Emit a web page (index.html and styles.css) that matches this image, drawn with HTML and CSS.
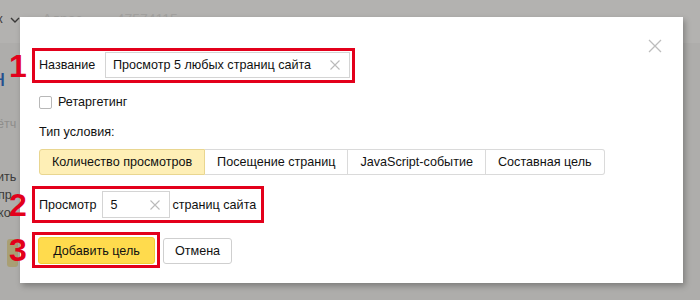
FILE: index.html
```html
<!DOCTYPE html>
<html lang="ru">
<head>
<meta charset="utf-8">
<title>Добавить цель</title>
<link rel="stylesheet" href="styles.css">
</head>
<body>
<div class="page">
  <div class="top">
    <span class="crumb">к</span>
    <svg class="chev" width="10" height="6" viewBox="0 0 10 6"><path d="M1 1l4 4 4-4" fill="none" stroke="#3a3938" stroke-width="1.4"/></svg>
    <span class="addr">Адрес</span>
    <span class="addr-num">47574115</span>
  </div>
  <div class="side">
    <span class="big-n">н</span>
    <span class="s1">ётч</span>
    <span class="s2">ить</span>
    <span class="s3">пр</span>
    <span class="s4">ко</span>
    <span class="sq"></span>
  </div>
</div>

<div class="modal">
  <svg class="close" width="14" height="14" viewBox="0 0 14 14"><path d="M1 1l12 12M13 1L1 13" stroke="#bdbdbd" stroke-width="1.3" fill="none"/></svg>
  <div class="content">
    <div class="annot a1">
      <span class="num">1</span>
      <span class="lbl">Название</span>
      <div class="input in1">
        <span class="val">Просмотр 5 любых страниц сайта</span>
        <svg class="clr" width="10" height="10" viewBox="0 0 10 10"><path d="M0.5 0.5l9 9M9.5 0.5l-9 9" stroke="#bbb" stroke-width="1.1" fill="none"/></svg>
      </div>
    </div>

    <label class="check">
      <span class="box"></span>
      <span>Ретаргетинг</span>
    </label>

    <div class="type">Тип условия:</div>

    <div class="tabs">
      <span class="tab active">Количество просмотров</span>
      <span class="tab">Посещение страниц</span>
      <span class="tab">JavaScript-событие</span>
      <span class="tab">Составная цель</span>
    </div>

    <div class="annot a2">
      <span class="num">2</span>
      <span class="lbl2">Просмотр</span>
      <div class="input in2">
        <span class="val">5</span>
        <svg class="clr" width="10" height="10" viewBox="0 0 10 10"><path d="M0.5 0.5l9 9M9.5 0.5l-9 9" stroke="#bbb" stroke-width="1.1" fill="none"/></svg>
      </div>
      <span class="after">страниц сайта</span>
    </div>

    <div class="actions">
      <div class="annot a3">
        <span class="num">3</span>
        <button class="btn primary">Добавить цель</button>
      </div>
      <button class="btn cancel">Отмена</button>
    </div>
  </div>
</div>
</body>
</html>
```

FILE: styles.css
```css
html, body {
  margin: 0;
  padding: 0;
}
body {
  width: 700px;
  height: 300px;
  overflow: hidden;
  position: relative;
  background: #afaeac;
  font-family: "Liberation Sans", Arial, sans-serif;
  font-size: 12.6px;
  color: #111;
}

/* background page (dimmed) */
.page {
  height: 300px;
  background: linear-gradient(#b3b2b0 0, #b3b2b0 43px, #aeadab 43px);
}
.top {
  height: 43px;
  display: flex;
  align-items: flex-start;
  padding-top: 11px;
  box-sizing: border-box;
  line-height: 16px;
}
.crumb {
  color: #3a3938;
  margin-left: -3px;
}
.chev {
  margin: 6px 0 0 7px;
}
.addr {
  color: #a3a2a0;
  margin-left: 23px;
  font-size: 14px;
}
.addr-num {
  color: #a3a2a0;
  margin-left: 34px;
  font-size: 14px;
}
.side {
  display: flex;
  flex-direction: column;
  align-items: flex-start;
  line-height: 16px;
  color: #3b3a39;
}
.big-n {
  margin-top: 24px;
  margin-left: -8px;
  font-size: 24px;
  line-height: 22px;
  color: #24508f;
}
.s1 {
  margin-top: 27px;
  margin-left: -3px;
  color: #8e8d8b;
}
.s2 {
  margin-top: 37px;
  margin-left: -3px;
}
.s3 {
  margin-top: 2px;
  margin-left: -2px;
}
.s4 {
  margin-top: 2px;
  margin-left: -2px;
}
.sq {
  margin-top: 18px;
  margin-left: 7px;
  width: 11px;
  height: 28px;
  border-radius: 3px;
  background: #a99f74;
}

/* modal */
.modal {
  position: absolute;
  left: 20px;
  top: 17px;
  width: 663px;
  height: 266px;
  background: #fff;
  box-shadow: 2px 3px 6px rgba(0, 0, 0, 0.28);
}
.close {
  position: absolute;
  left: 628px;
  top: 22px;
}
.content {
  padding: 31px 0 0 12px;
  display: flex;
  flex-direction: column;
  align-items: flex-start;
}
.annot {
  position: relative;
  display: flex;
  align-items: center;
  border: 3px solid #e3001b;
}
.num {
  position: absolute;
  left: -26px;
  top: 50%;
  transform: translateY(-50%);
  font-size: 32px;
  font-weight: bold;
  line-height: 30px;
  color: #e3001b;
}
.a1 {
  padding: 1px 2px 2px 4px;
}
.lbl {
  width: 66px;
}
.input {
  box-sizing: border-box;
  display: flex;
  align-items: center;
  justify-content: space-between;
  border: 1px solid #d4d4d4;
  background: #fff;
}
.in1 {
  width: 245px;
  height: 26px;
  padding: 0 9px 0 7px;
}
.check {
  display: flex;
  align-items: center;
  gap: 6px;
  margin: 12px 0 0 7px;
  height: 14px;
}
.box {
  box-sizing: border-box;
  width: 13px;
  height: 13px;
  border: 1px solid #b8b8b8;
  border-radius: 2px;
  background: #fff;
}
.type {
  margin: 15px 0 0 7px;
  line-height: 16px;
}
.tabs {
  display: flex;
  margin: 9px 0 0 7px;
  height: 26px;
}
.tab {
  display: flex;
  align-items: center;
  padding: 0 12px;
  border: 1px solid #dadada;
  border-left-width: 0;
  box-sizing: border-box;
  height: 26px;
  background: #fff;
}
.tab:first-child {
  border-left-width: 1px;
  border-radius: 3px 0 0 3px;
}
.tab:last-child {
  border-radius: 0 3px 3px 0;
}
.tab.active {
  background: #feefb6;
  border-color: #e9d690;
}
.a2 {
  margin-top: 11px;
  padding: 2px 5px 2px 4px;
}
.lbl2 {
  margin-right: 5px;
}
.in2 {
  width: 68px;
  height: 27px;
  padding: 0 9px 0 8px;
}
.after {
  margin-left: 3px;
}
.actions {
  display: flex;
  align-items: center;
  gap: 3px;
  margin-top: 9px;
}
.a3 {
  padding: 2px 2px 1px 3px;
}
.btn {
  font-family: "Liberation Sans", Arial, sans-serif;
  font-size: 12.6px;
  color: #111;
  height: 27px;
  border-radius: 3px;
  box-sizing: border-box;
  cursor: pointer;
}
.primary {
  width: 117px;
  background: #ffdb4d;
  border: 1px solid #f2cc34;
}
.cancel {
  width: 69px;
  margin-top: 1px;
  height: 26px;
  background: #fff;
  border: 1px solid #cfcfcf;
}
```
